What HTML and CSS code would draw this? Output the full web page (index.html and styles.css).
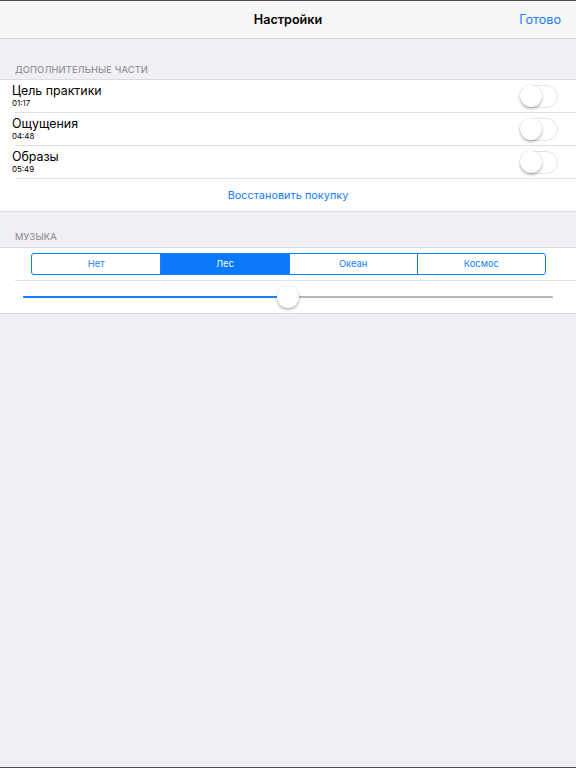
FILE: index.html
```html
<!DOCTYPE html>
<html lang="ru">
<head>
<meta charset="utf-8">
<title>Настройки</title>
<link rel="stylesheet" href="styles.css">
</head>
<body>
<div class="screen">
  <header class="nav">
    <h1 class="nav-title">Настройки</h1>
    <button class="nav-done">Готово</button>
  </header>

  <div class="section-header first">ДОПОЛНИТЕЛЬНЫЕ ЧАСТИ</div>
  <div class="group">
    <div class="row">
      <div class="row-text">
        <div class="row-title">Цель практики</div>
        <div class="row-sub">01:17</div>
      </div>
      <span class="switch"><span class="knob"></span></span>
    </div>
    <div class="row">
      <div class="row-text">
        <div class="row-title">Ощущения</div>
        <div class="row-sub">04:48</div>
      </div>
      <span class="switch"><span class="knob"></span></span>
    </div>
    <div class="row">
      <div class="row-text">
        <div class="row-title">Образы</div>
        <div class="row-sub">05:49</div>
      </div>
      <span class="switch"><span class="knob"></span></span>
    </div>
    <div class="row row-button">
      <span class="link">Восстановить покупку</span>
    </div>
  </div>

  <div class="section-header">МУЗЫКА</div>
  <div class="group">
    <div class="row row-seg">
      <div class="segmented">
        <span class="seg">Нет</span>
        <span class="seg active">Лес</span>
        <span class="seg">Океан</span>
        <span class="seg">Космос</span>
      </div>
    </div>
    <div class="row row-slider">
      <div class="slider">
        <div class="track-fill" style="width: 50%"></div>
        <div class="thumb" style="left: calc(50% - 11px)"></div>
      </div>
    </div>
  </div>
  <div class="filler"></div>
</div>
</body>
</html>
```

FILE: styles.css
```css
* { box-sizing: border-box; }
html, body { margin: 0; padding: 0; }
body {
  font-family: Inter, "Noto Sans", Roboto, sans-serif;
  background: #efeff4;
  color: #000;
}
.screen {
  height: 768px;
  display: flex;
  flex-direction: column;
  border-top: 1px solid #505050;
  border-bottom: 1px solid #505050;
  background: #efeff4;
}
.nav {
  height: 38px;
  flex: none;
  background: #f7f7f7;
  border-bottom: 1px solid #d4d4d8;
  display: flex;
  align-items: center;
  justify-content: center;
  position: relative;
}
.nav-title {
  margin: 0;
  font-size: 12.6px;
  font-weight: 600;
}
.nav-done {
  position: absolute;
  right: 15px;
  top: 0;
  bottom: 0;
  border: 0;
  background: none;
  padding: 0;
  font-family: inherit;
  font-size: 12.6px;
  color: #157efb;
}
.section-header {
  flex: none;
  height: 35px;
  padding: 0 15px 5px;
  display: flex;
  align-items: flex-end;
  font-size: 9.4px;
  font-weight: 400;
  color: #86868b;
  letter-spacing: 0.1px;
}
.section-header.first { height: 40px; padding-bottom: 4px; }
.group {
  flex: none;
  background: #fff;
  border-top: 1px solid #dcdce0;
  border-bottom: 1px solid #dcdce0;
}
.row {
  height: 32px;
  display: flex;
  align-items: center;
  padding: 0 18px 0 12px;
  position: relative;
}
.row + .row { margin-top: 1px; }
.row + .row::before {
  content: "";
  position: absolute;
  left: 15px;
  right: 0;
  top: -1px;
  height: 1px;
  background: #e0e0e4;
}
.row-text { flex: 1; display: flex; flex-direction: column; }
.row-title { font-size: 12.4px; line-height: 14px; }
.row-sub { font-size: 7.9px; line-height: 10px; margin-top: 0; }
.switch {
  width: 38px;
  height: 23px;
  border-radius: 12px;
  border: 1.5px solid #e4e4e4;
  background: #fff;
  position: relative;
  flex: none;
}
.knob {
  position: absolute;
  left: -1px;
  top: -1px;
  width: 22px;
  height: 22px;
  border-radius: 50%;
  background: #fff;
  box-shadow: 0 2px 3px rgba(0,0,0,0.25), 0 0 0 0.5px rgba(0,0,0,0.08);
}
.row-button { justify-content: center; padding: 0; }
.link { font-size: 10.9px; color: #157efb; }
.row-seg { padding: 0 30px 0 31px; }
.segmented {
  flex: 1;
  display: grid;
  grid-template-columns: repeat(4, 1fr);
  height: 22px;
  border: 1px solid #157efb;
  border-radius: 3px;
  overflow: hidden;
  margin-top: -1px;
}
.seg {
  display: flex;
  align-items: center;
  justify-content: center;
  font-size: 9.4px;
  color: #157efb;
  border-left: 1px solid #157efb;
}
.seg:first-child { border-left: 0; }
.seg.active { background: #0a7afb; color: #fff; }
.row-slider { padding: 0 23px; }
.slider {
  flex: 1;
  height: 2px;
  background: #b6b6b6;
  position: relative;
  border-radius: 1px;
}
.track-fill {
  position: absolute;
  left: 0;
  top: 0;
  bottom: 0;
  background: #157efb;
  border-radius: 1px;
}
.thumb {
  position: absolute;
  top: -10px;
  width: 22px;
  height: 22px;
  border-radius: 50%;
  background: #fff;
  box-shadow: 0 2px 3px rgba(0,0,0,0.25), 0 0 0 0.5px rgba(0,0,0,0.08);
}
.filler { flex: 1; }
```
